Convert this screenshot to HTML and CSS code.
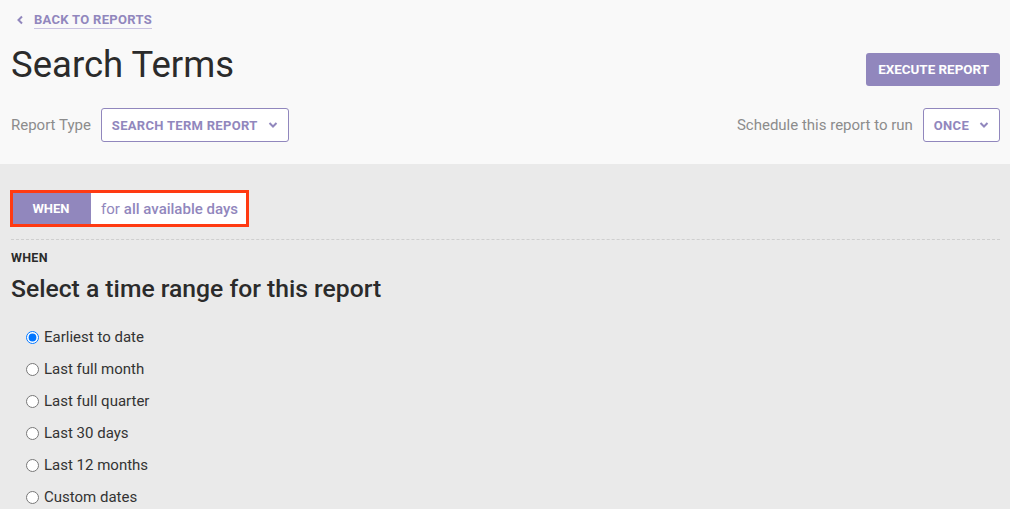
FILE: index.html
```html
<!DOCTYPE html>
<html lang="en">
<head>
    <meta charset="UTF-8">
    <title>Search Terms</title>
    <link rel="stylesheet" href="styles.css">
</head>
<body>

    <div class="top">
        <a href="#" class="back">
            <svg width="8" height="10" viewBox="0 0 8 10"><path d="M6 1.5L2.5 5L6 8.5" fill="none" stroke="#9187bd" stroke-width="2"/></svg>
            <span>BACK TO REPORTS</span>
        </a>

        <div class="title-row">
            <h1>Search Terms</h1>
            <button class="execute">EXECUTE REPORT</button>
        </div>

        <div class="options-row">
            <div class="option">
                <span class="label">Report Type</span>
                <div class="select">SEARCH TERM REPORT
                    <svg width="10" height="6" viewBox="0 0 10 6"><path d="M1.5 1L5 4.5L8.5 1" fill="none" stroke="#9187bd" stroke-width="2"/></svg>
                </div>
            </div>
            <div class="option">
                <span class="label">Schedule this report to run</span>
                <div class="select">ONCE
                    <svg width="10" height="6" viewBox="0 0 10 6"><path d="M1.5 1L5 4.5L8.5 1" fill="none" stroke="#9187bd" stroke-width="2"/></svg>
                </div>
            </div>
        </div>
    </div>

    <div class="main">
        <div class="pill">
            <div class="pill-tag">WHEN</div>
            <div class="pill-value">for <strong>all available days</strong></div>
        </div>

        <div class="section">
            <div class="section-label">WHEN</div>
            <h2>Select a time range for this report</h2>

            <div class="radios">
                <label><input type="radio" name="range" checked> Earliest to date</label>
                <label><input type="radio" name="range"> Last full month</label>
                <label><input type="radio" name="range"> Last full quarter</label>
                <label><input type="radio" name="range"> Last 30 days</label>
                <label><input type="radio" name="range"> Last 12 months</label>
                <label><input type="radio" name="range"> Custom dates</label>
            </div>
        </div>
    </div>

</body>
</html>
```

FILE: styles.css
```css
body {
    margin: 0;
    font-family: Roboto, "Liberation Sans", sans-serif;
    background-color: #eaeaea;
    color: #2b2b2b;
    overflow: hidden;
}
.top {
    background-color: #f9f9f9;
    padding: 10px 10px 0 11px;
    height: 154px;
}
.back {
    display: inline-flex;
    align-items: center;
    gap: 10px;
    margin-left: 5px;
    color: #9187bd;
    text-decoration: none;
    font-size: 13px;
    font-weight: 700;
    letter-spacing: 0.3px;
}
.back span {
    border-bottom: 1px solid #c9c3e0;
    line-height: 16px;
}
.title-row {
    display: flex;
    justify-content: space-between;
    align-items: flex-end;
    margin-top: 14px;
}
h1 {
    margin: 0;
    font-size: 36.5px;
    font-weight: 400;
    line-height: 44px;
    color: #2b2b2b;
}
.execute {
    background-color: #9187bd;
    color: white;
    border: none;
    border-radius: 3px;
    font-family: inherit;
    font-size: 13.4px;
    font-weight: 700;
    padding: 0 11px 0 12px;
    height: 33px;
    margin-bottom: 1px;
}
.options-row {
    display: flex;
    justify-content: space-between;
    margin-top: 21px;
}
.option {
    display: flex;
    align-items: center;
    gap: 10px;
}
.label {
    color: #8c8c8c;
    font-size: 15px;
}
.select {
    display: flex;
    align-items: center;
    gap: 10px;
    box-sizing: border-box;
    height: 34px;
    padding: 0 10px;
    border: 1px solid #9187bd;
    border-radius: 3px;
    background-color: white;
    color: #9187bd;
    font-size: 13px;
    font-weight: 700;
    letter-spacing: 0.3px;
}
.main {
    padding: 26px 10px 0 11px;
}
.pill {
    display: inline-flex;
    border: 3px solid #ff3a12;
    margin-left: -1px;
    height: 31px;
}
.pill-tag {
    background-color: #9187bd;
    color: white;
    font-size: 13px;
    font-weight: 700;
    width: 78px;
    display: flex;
    align-items: center;
    justify-content: center;
    padding-right: 2px;
    box-sizing: border-box;
}
.pill-value {
    background-color: white;
    color: #9187bd;
    font-size: 15px;
    padding: 0 8px 0 10px;
    display: flex;
    align-items: center;
    gap: 4px;
}
.pill-value strong {
    font-weight: 500;
}
.section {
    margin-top: 12px;
    border-top: 1px dashed #cfcfcf;
    padding-top: 10px;
}
.section-label {
    font-size: 12.5px;
    font-weight: 700;
    letter-spacing: 0.3px;
    color: #2b2b2b;
}
h2 {
    margin: 9px 0 0;
    font-size: 24.7px;
    font-weight: 500;
    line-height: 30px;
}
.radios {
    display: flex;
    flex-direction: column;
    gap: 12px;
    margin-top: 23px;
    padding-left: 14px;
}
.radios label {
    display: flex;
    align-items: center;
    height: 20px;
    font-size: 15px;
    color: #333;
}
.radios input {
    margin: 0 5px 0 1px;
    width: 13px;
    height: 13px;
}
```
